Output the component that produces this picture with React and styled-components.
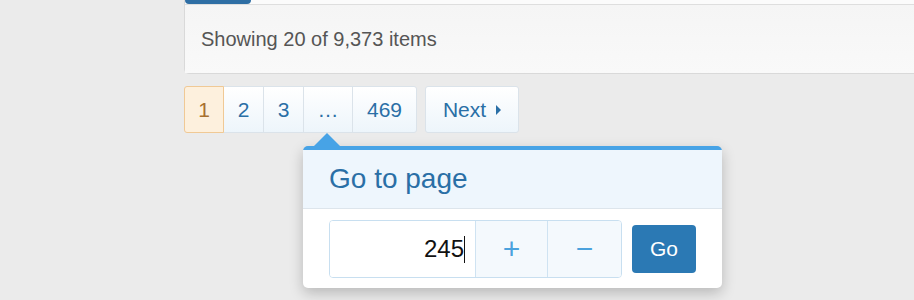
import React from 'react'
import styled, { createGlobalStyle, css } from 'styled-components'

const GlobalStyle = createGlobalStyle`
    body {
        margin: 0;
        background: #ebebeb;
        font-family: "Liberation Sans", Arial, sans-serif;
    }
`

const Page = styled.div`
    display: flow-root;
    padding-left: 184px;
    height: 300px;
    overflow: hidden;
`

const Panel = styled.div`
    margin-top: -34px;
    margin-right: -20px;
    background: #f6f6f6;
    border: 1px solid #d9d9d9;
    border-radius: 0 0 0 5px;
`

const Toolbar = styled.div`
    height: 37px;
    display: flex;
    align-items: flex-start;
    border-bottom: 1px solid #dedede;
    background: #fbfbfb;
`

const ToolButton = styled.div`
    width: 66px;
    height: 37px;
    background: #2e6ea4;
    border-radius: 0 0 4px 4px;
`

const Footer = styled.div`
    height: 68px;
    display: flex;
    align-items: center;
    padding: 0 16px;
    font-size: 20px;
    color: #555;
    background: linear-gradient(#f5f5f5, #f9f9f9);
`

const PagerRow = styled.div`
    position: relative;
    display: flex;
    gap: 9px;
    margin-top: 12px;
`

const Group = styled.div`
    display: flex;
`

const PageButton = styled.div`
    width: ${p => p.$w}px;
    height: 47px;
    box-sizing: border-box;
    display: flex;
    align-items: center;
    justify-content: center;
    font-size: 21px;
    color: #2a6fa6;
    background: linear-gradient(#ffffff, #edf5fb);
    border: 1px solid #dbe3ea;
    margin-left: -1px;
    &:first-child {
        margin-left: 0;
        border-radius: 3px 0 0 3px;
    }
    &:last-child {
        border-radius: 0 3px 3px 0;
    }
    ${p => p.$current && css`
        position: relative;
        color: #a8702f;
        background: #fdf0dd;
        border-color: #f0c995;
    `}
    ${p => p.$single && css`
        border-radius: 3px;
        gap: 10px;
    `}
`

const Caret = styled.span`
    width: 0;
    height: 0;
    border-top: 5px solid transparent;
    border-bottom: 5px solid transparent;
    border-left: 5px solid #2a6fa6;
`

const Popup = styled.div`
    position: absolute;
    top: 60px;
    left: 119px;
    width: 419px;
    background: #fff;
    border-top: 4px solid #47a3e6;
    border-radius: 5px;
    box-shadow: 0 5px 14px rgba(0, 0, 0, 0.22);
    &::before {
        content: "";
        position: absolute;
        left: 11px;
        top: -17px;
        border-left: 13px solid transparent;
        border-right: 13px solid transparent;
        border-bottom: 13px solid #47a3e6;
    }
`

const PopupHeader = styled.div`
    height: 58px;
    display: flex;
    align-items: center;
    padding: 0 26px;
    font-size: 28px;
    color: #2a6fa6;
    background: #eef6fd;
    border-bottom: 1px solid #dde5ec;
`

const PopupBody = styled.div`
    display: flex;
    align-items: center;
    gap: 10px;
    padding: 11px 26px 10px 26px;
`

const InputGroup = styled.div`
    display: flex;
    height: 56px;
    border: 1px solid #c8dff0;
    border-radius: 4px;
    overflow: hidden;
`

const NumberField = styled.div`
    width: 147px;
    display: flex;
    align-items: center;
    justify-content: flex-end;
    padding-right: 10px;
    box-sizing: border-box;
    font-size: 24px;
    color: #111;
    background: #fff;
`

const TextCaret = styled.span`
    width: 1px;
    height: 27px;
    background: #111;
`

const StepButton = styled.div`
    width: ${p => p.$w}px;
    display: flex;
    align-items: center;
    justify-content: center;
    font-size: 30px;
    color: #4ba2dd;
    background: #f4f9fd;
    border-left: 1px solid #cfe3f2;
`

const GoButton = styled.div`
    width: 65px;
    height: 48px;
    display: flex;
    align-items: center;
    justify-content: center;
    font-size: 21px;
    color: #fff;
    background: #2b79b4;
    border-radius: 4px;
`

const pages = [
    { label: '1', w: 40 },
    { label: '2', w: 41 },
    { label: '3', w: 41 },
    { label: '…', w: 50 },
    { label: '469', w: 65 },
]

const App = () => {
    return (
        <Page>
            <GlobalStyle />
            <Panel>
                <Toolbar>
                    <ToolButton />
                </Toolbar>
                <Footer>Showing 20 of 9,373 items</Footer>
            </Panel>
            <PagerRow>
                <Group>
                    {pages.map((p, i) => (
                        <PageButton key={p.label} $current={i === 0} $w={p.w}>
                            {p.label}
                        </PageButton>
                    ))}
                </Group>
                <PageButton $single $w={94}>
                    Next <Caret />
                </PageButton>
                <Popup>
                    <PopupHeader>Go to page</PopupHeader>
                    <PopupBody>
                        <InputGroup>
                            <NumberField>245<TextCaret /></NumberField>
                            <StepButton $w={72}>+</StepButton>
                            <StepButton $w={74}>−</StepButton>
                        </InputGroup>
                        <GoButton>Go</GoButton>
                    </PopupBody>
                </Popup>
            </PagerRow>
        </Page>
    )
}

export default App
